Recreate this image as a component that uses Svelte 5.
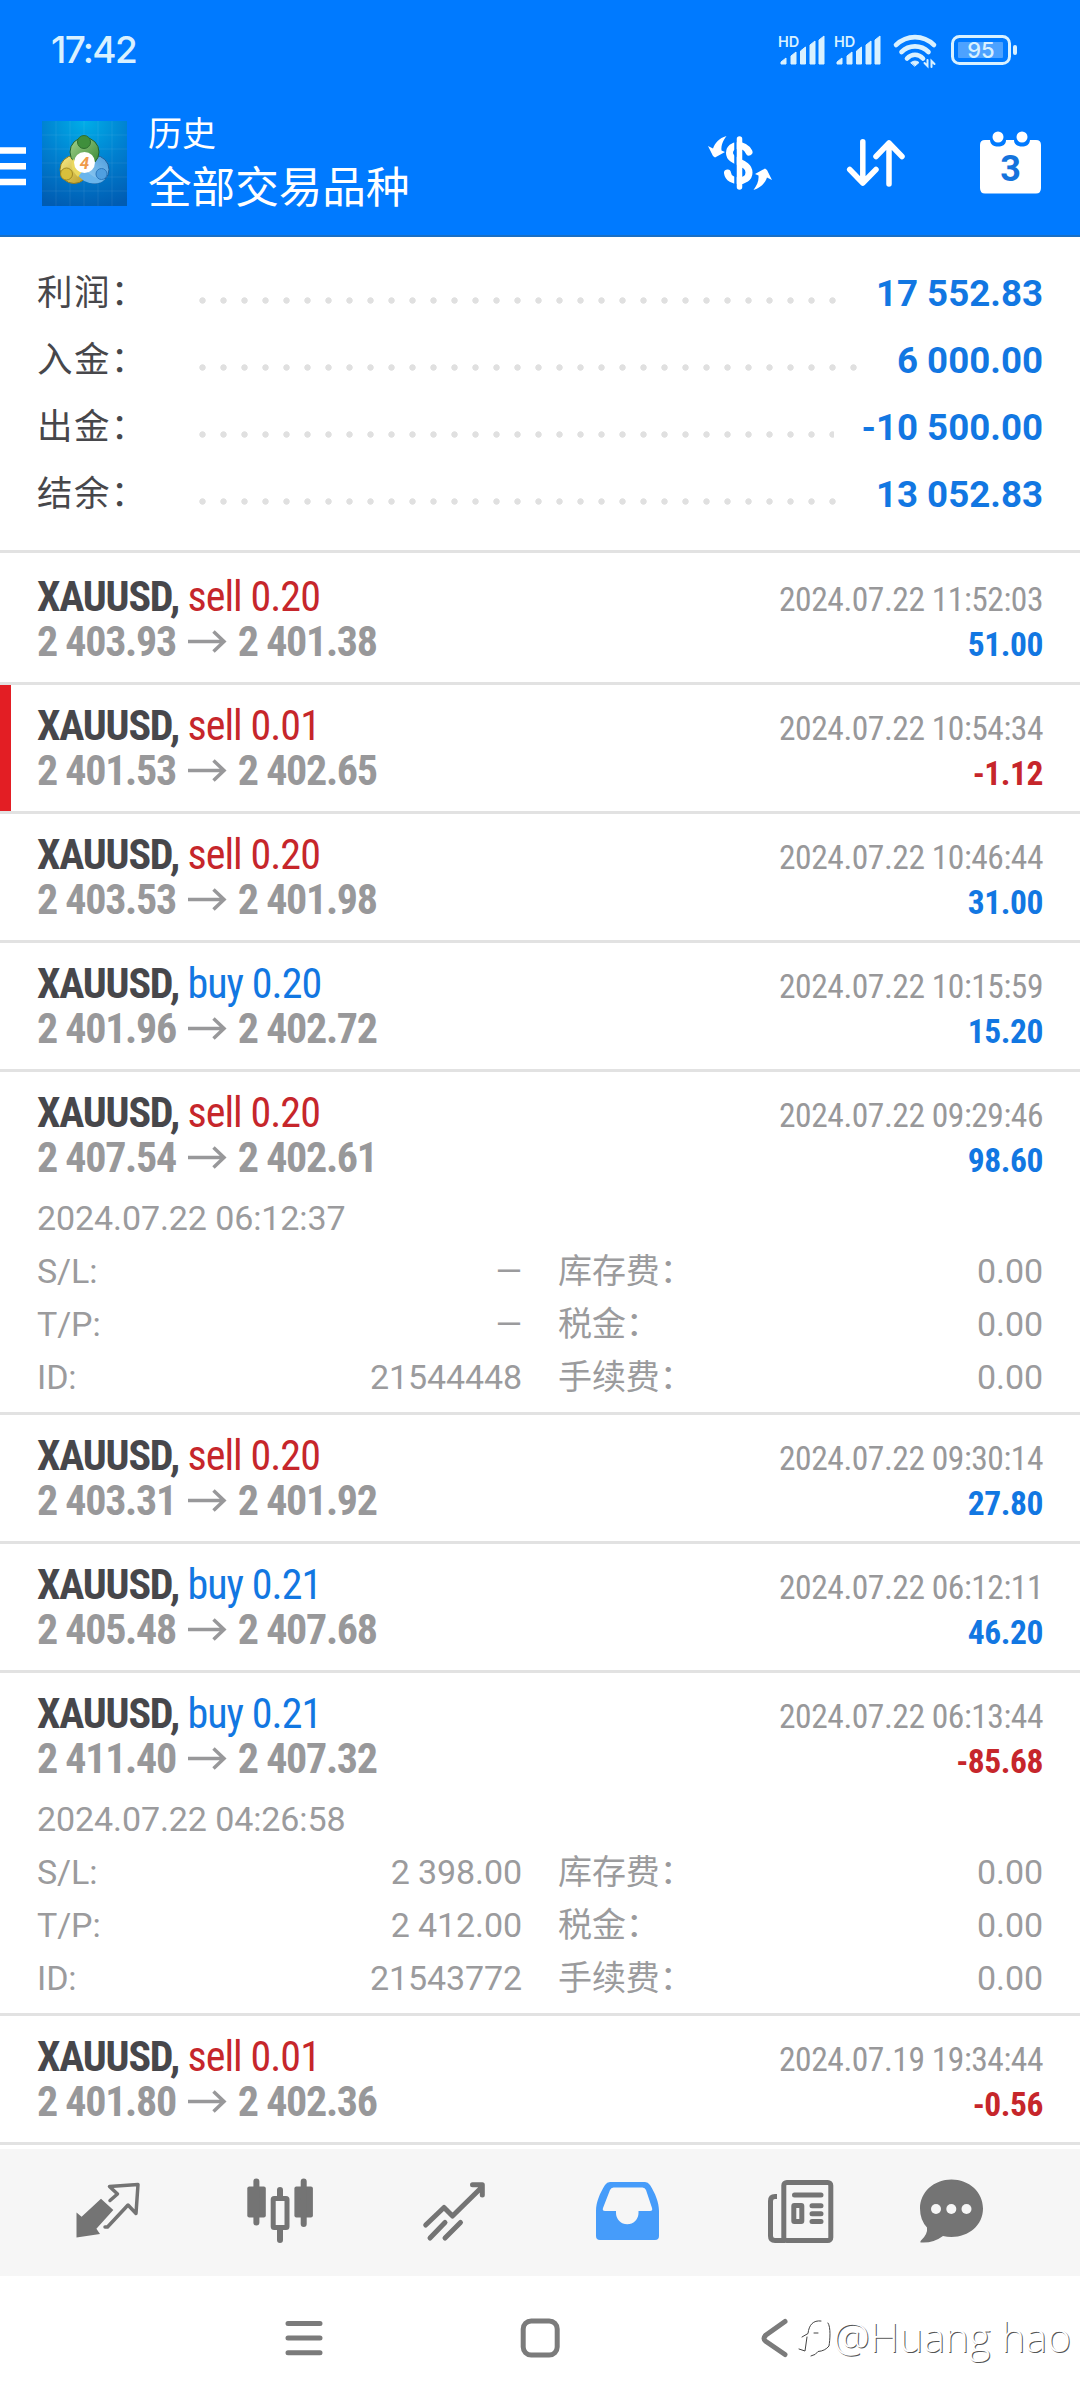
<script lang="ts">
  interface SummaryLine {
    label: string;
    value: string;
  }

  interface Details {
    opened: string;
    rows: [string, string, string, string][];
  }

  interface Deal {
    side: 'buy' | 'sell';
    volume: string;
    open: string;
    close: string;
    time: string;
    profit: string;
    marked?: boolean;
    details?: Details;
  }

  const summary: SummaryLine[] = [
    { label: '利润：', value: '17 552.83' },
    { label: '入金：', value: '6 000.00' },
    { label: '出金：', value: '-10 500.00' },
    { label: '结余：', value: '13 052.83' },
  ];

  function makeDetails(opened: string, sl: string, tp: string, id: string): Details {
    return {
      opened,
      rows: [
        ['S/L:', sl, '库存费：', '0.00'],
        ['T/P:', tp, '税金：', '0.00'],
        ['ID:', id, '手续费：', '0.00'],
      ],
    };
  }

  const deals: Deal[] = [
    { side: 'sell', volume: '0.20', open: '2 403.93', close: '2 401.38', time: '2024.07.22 11:52:03', profit: '51.00' },
    { side: 'sell', volume: '0.01', open: '2 401.53', close: '2 402.65', time: '2024.07.22 10:54:34', profit: '-1.12', marked: true },
    { side: 'sell', volume: '0.20', open: '2 403.53', close: '2 401.98', time: '2024.07.22 10:46:44', profit: '31.00' },
    { side: 'buy', volume: '0.20', open: '2 401.96', close: '2 402.72', time: '2024.07.22 10:15:59', profit: '15.20' },
    {
      side: 'sell', volume: '0.20', open: '2 407.54', close: '2 402.61', time: '2024.07.22 09:29:46', profit: '98.60',
      details: makeDetails('2024.07.22 06:12:37', '—', '—', '21544448'),
    },
    { side: 'sell', volume: '0.20', open: '2 403.31', close: '2 401.92', time: '2024.07.22 09:30:14', profit: '27.80' },
    { side: 'buy', volume: '0.21', open: '2 405.48', close: '2 407.68', time: '2024.07.22 06:12:11', profit: '46.20' },
    {
      side: 'buy', volume: '0.21', open: '2 411.40', close: '2 407.32', time: '2024.07.22 06:13:44', profit: '-85.68',
      details: makeDetails('2024.07.22 04:26:58', '2 398.00', '2 412.00', '21543772'),
    },
    { side: 'sell', volume: '0.01', open: '2 401.80', close: '2 402.36', time: '2024.07.19 19:34:44', profit: '-0.56' },
  ];
</script>

<div class="screen">
  <header>
    <div class="status">
      <span class="clock">17:42</span>
      <div class="indicators">
        {#each [0, 1] as sim (sim)}
          <svg class="signal" width="48" height="32" viewBox="0 0 48 32">
            <text x="0" y="12.5">HD</text>
            <path d="M3 30v-2l5-4v6zM13 30V22l5-4v12zM22.500 30V17l5-4v17zM32 30V11l5-4v23zM41 30V6l5-4v28z" />
          </svg>
        {/each}
        <svg class="wifi" width="44" height="34" viewBox="0 0 44 34">
          <path d="M3 11C14 0.500 30 0.500 41 11M8.500 18C16 10.500 28 10.500 35.500 18M14 24.500C18.500 19.500 25.500 19.500 30 24.500" />
          <path class="solid" d="M18 28.500Q22 25.500 26 28.500L22 32Z" />
          <path class="thin" d="M34.500 26v6l-3-3M38.500 33v-6l3 3" />
        </svg>
        <svg class="battery" width="67" height="30" viewBox="0 0 67 30">
          <rect class="shell" x="1.500" y="1.500" width="57" height="27" rx="7" />
          <rect class="level" x="7" y="7" width="45" height="16" rx="1" />
          <rect class="cap" x="62" y="10" width="4" height="10" rx="2" />
          <text x="30" y="23" text-anchor="middle">95</text>
        </svg>
      </div>
    </div>

    <div class="toolbar">
      <svg class="burger" width="26" height="40" viewBox="0 0 26 40">
        <path d="M0 5.500H26M0 21.300H26M0 37H26" />
      </svg>
      <svg class="logo" width="85" height="85" viewBox="0 0 85 85">
        <defs>
          <radialGradient id="sky" cx="0.500" cy="0" r="1.050">
            <stop offset="0" stop-color="#00aee8" />
            <stop offset="0.500" stop-color="#0080d0" />
            <stop offset="1" stop-color="#005cb2" />
          </radialGradient>
          <linearGradient id="leaf" x1="0" y1="0" x2="1" y2="1">
            <stop offset="0" stop-color="#a6d48f" />
            <stop offset="1" stop-color="#33842f" />
          </linearGradient>
          <linearGradient id="gold" x1="0" y1="0" x2="1" y2="1">
            <stop offset="0" stop-color="#f8ee8a" />
            <stop offset="1" stop-color="#b8961f" />
          </linearGradient>
          <linearGradient id="water" x1="1" y1="0" x2="0" y2="1">
            <stop offset="0" stop-color="#4b9ada" />
            <stop offset="1" stop-color="#9fd6f8" />
          </linearGradient>
        </defs>
        <rect width="85" height="85" fill="url(#sky)" />
        <path class="grid" d="M14 0V85M28 0V85M42 0V85M56 0V85M70 0V85M0 14H85M0 28H85M0 42H85M0 56H85M0 70H85" />
        <circle cx="53" cy="48.500" r="14" fill="url(#water)" stroke="#1d5e9c" />
        <circle cx="32" cy="48.500" r="14" fill="url(#gold)" stroke="#8b7a20" />
        <circle cx="42.500" cy="31" r="14.500" fill="url(#leaf)" stroke="#23622b" />
        <path d="M34 51Q40 62.500 53 62.500Q60 62 63 58Q50 58 43 48Z" fill="#69b5ec" />
        <path d="M42 48L31 38Q26 46 36 56Z" fill="#ead85f" />
        <circle cx="42" cy="21" r="6.500" fill="#3f8f3c" stroke="#2c6e30" />
        <circle cx="24.500" cy="53" r="6" fill="#d8bf3c" stroke="#a08a24" />
        <circle cx="59.500" cy="53" r="5.500" fill="#4f9fe0" stroke="#2c78bd" />
        <circle cx="42.500" cy="41.500" r="10.500" fill="#fff" />
        <text x="42.500" y="47.500" text-anchor="middle">4</text>
      </svg>
      <div class="titles">
        <span class="title">历史</span>
        <span class="subtitle">全部交易品种</span>
      </div>
      <div class="actions">
        <svg width="64" height="54" viewBox="0 0 64 54">
          <path class="money" d="M41 16C37 7 21.500 7.500 21.500 17C21.500 27 41 25 41 36.500C41 47.500 21 47.500 19.500 37" />
          <path class="slit" d="M27.500 6V48" />
          <path class="bar" d="M31.500 3V51" />
          <path class="fill" d="M0 10L5 12.500C7 7 11 2 18.500 0C15 5 13 9 13.500 14.500L17 16L7 21.500L5 20Z" />
          <path class="fill" d="M64 44L59 41.500C57 47 53 52 45.500 54C49 49 51 45 50.500 39.500L47 38L57 32.500L59 34Z" />
        </svg>
        <svg class="sort" width="58" height="48" viewBox="0 0 58 48">
          <path d="M15.800 2.700V44M2.700 30.500L15.800 44L29 30.500M42 45V4M29 17.500L42 4L55 17.500" />
        </svg>
        <svg class="calendar" width="61" height="63" viewBox="0 0 61 63">
          <path d="M5 9H10C10.500 14 14 15.500 18 15.500S26 14 26 9H34C34 14 38 15.500 42 15.500S49.500 14 50 9H56Q61 9 61 14V57Q61 62.500 56 62.500H5Q0 62.500 0 57V14Q0 9 5 9Z" />
          <circle cx="18" cy="6" r="5.500" />
          <circle cx="42" cy="6" r="5.500" />
          <text x="30.500" y="50" text-anchor="middle">3</text>
        </svg>
      </div>
    </div>
  </header>

  <section class="summary">
    {#each summary as line (line.label)}
      <div class="summary-line">
        <span class="label">{line.label}</span>
        <span class="dots"></span>
        <span class="value">{line.value}</span>
      </div>
    {/each}
  </section>

  <main>
    {#each deals as deal (deal.time)}
      <article class="deal" class:marked={deal.marked}>
        <div class="line">
          <span class="symbol">XAUUSD, <span class="side {deal.side}">{deal.side} {deal.volume}</span></span>
          <span class="time">{deal.time}</span>
        </div>
        <div class="line">
          <span class="prices">
            {deal.open}
            <svg class="arrow" width="38" height="22" viewBox="0 0 38 22">
              <path d="M0 10.500H36M25.500 0.500L36 10.500L25.500 20.500" />
            </svg>
            {deal.close}
          </span>
          <span class="profit" class:loss={deal.profit.startsWith('-')}>{deal.profit}</span>
        </div>
        {#if deal.details}
          <div class="details">
            <div class="opened">{deal.details.opened}</div>
            {#each deal.details.rows as [name, value, fee, amount] (name)}
              <div class="details-row">
                <span>{name}</span>
                <span class="num">{value}</span>
                <span class="fee">{fee}</span>
                <span class="num">{amount}</span>
              </div>
            {/each}
          </div>
        {/if}
      </article>
    {/each}
  </main>

  <nav class="tabs">
    <div class="tab">
      <svg width="65" height="58" viewBox="0 0 65 58">
        <path class="solid" d="M1.500 55.500V30.500L6.600 34.700L26 16.700L38.300 28L21.400 46.700L25 52Z" />
        <path class="line-3" d="M35 18.500L42.500 12L34.500 4.500L63 2.500L61 31.500L53 23L32.500 45H30" />
      </svg>
    </div>
    <div class="tab">
      <svg width="67" height="66" viewBox="0 0 67 66">
        <rect class="solid" x="0.300" y="8.500" width="18.500" height="31" rx="2" />
        <rect class="solid" x="47.400" y="8.500" width="18.500" height="31" rx="2" />
        <rect class="line-5" x="26.200" y="20.500" width="13.800" height="29" rx="1" />
        <path class="line-6" d="M9.400 3.500V44.500M56.700 3.500V46M33 12V19M33 51V62" />
      </svg>
    </div>
    <div class="tab">
      <svg width="62" height="58" viewBox="0 0 62 58">
        <path class="line-5" d="M2.700 43L21 25.500L29.500 34L59 5M49.500 2.700H59.300V13M7 56L22 40.500M22 56L37.500 40.500" />
      </svg>
    </div>
    <div class="tab active">
      <svg width="63" height="58" viewBox="0 0 63 58">
        <path
          class="solid"
          fill-rule="evenodd"
          d="M14 0H49Q52 0 54 3C59 11 63 20 63 29V54Q63 58 59 58H4Q0 58 0 54V29C0 20 4 11 9 3Q11 0 14 0ZM17.500 5.500Q15 5.500 14 8L7 26Q6 29 9 29H20V31A11 11 0 0 0 42.500 31V29H54Q57 29 56 26L50 8Q49 5.500 46.500 5.500Z"
        />
      </svg>
    </div>
    <div class="tab">
      <svg width="67" height="65" viewBox="0 0 67 65">
        <rect class="line-5" x="16.800" y="3.500" width="47" height="58" rx="3" />
        <path class="line-5 butt" d="M10 17.500H8Q3.500 17.500 3.500 22V57Q3.500 61.500 8 61.500H18" />
        <rect class="line-5" x="26.800" y="26.500" width="8" height="16" rx="0.500" />
        <path class="line-5" d="M27.500 16H54M45 26.700H54M45 34.700H54M45 42.500H54" />
      </svg>
    </div>
    <div class="tab last">
      <svg width="64" height="64" viewBox="0 0 64 64">
        <path class="solid" d="M32.500 0.500C50 0.500 64 13 64 29.500S50 58 32.500 58Q28 58 24 57Q14 64.500 1.500 63.500Q1 62.500 2 61.500Q9 55 8 48.500Q1 41 1 29.500C1 13 15 0.500 32.500 0.500Z" />
        <g class="holes">
          <circle cx="17" cy="30" r="5" />
          <circle cx="32.300" cy="30" r="5" />
          <circle cx="47.500" cy="30" r="5" />
        </g>
      </svg>
    </div>
  </nav>

  <footer class="system-nav">
    <svg width="40" height="40" viewBox="0 0 40 40">
      <path d="M4 5.500H36M4 20H36M4 34.700H36" />
    </svg>
    <svg width="40" height="40" viewBox="0 0 40 40">
      <rect x="3.200" y="3" width="34" height="34" rx="8" />
    </svg>
    <svg width="40" height="40" viewBox="0 0 40 40">
      <path d="M29 3.500L10 17Q6 20.500 10 23.500L29 36.500" />
    </svg>
    <div class="watermark">
      <svg width="34" height="40" viewBox="0 0 34 40">
        <path d="M3 21L9 17.500C10 9 14 4 22 5M29 7C32 11 31 24 30 30Q26 35 19 35.500Q17 39 12 40M15 17H19M8 21L6 35L0 33" />
      </svg>
      <span>@Huang hao</span>
    </div>
  </footer>
</div>

<style>
  :global(body) {
    background: #fff;
  }

  .screen {
    width: 1080px;
    height: 2400px;
    display: flex;
    flex-direction: column;
    overflow: hidden;
    background: #fff;
    font-family: Roboto, 'Noto Sans CJK SC', sans-serif;
  }

  svg {
    display: block;
    flex: none;
    overflow: visible;
  }

  /* Header */
  header {
    box-sizing: border-box;
    height: 237px;
    background: #007aff;
    border-bottom: 2px solid #1a6fc4;
    color: #fff;
  }

  .status {
    height: 99px;
    padding: 0 62px 0 51px;
    display: flex;
    align-items: center;
    justify-content: space-between;
    color: #d9f1ff;
  }

  .clock {
    font-family: Inter, sans-serif;
    font-size: 37px;
    font-weight: 500;
    letter-spacing: -1.7px;
  }

  .indicators {
    display: flex;
    align-items: center;
    fill: #d9f1ff;
  }

  .signal {
    margin-right: 8px;
  }

  .signal text {
    font: 600 14.5px Inter, sans-serif;
  }

  .signal path {
    stroke: #d9f1ff;
    stroke-width: 1;
    stroke-linejoin: round;
  }

  .wifi {
    margin: 2px 14px 0 3px;
    fill: none;
    stroke: #d9f1ff;
    stroke-width: 4.6;
    stroke-linecap: round;
  }

  .wifi .solid {
    fill: #d9f1ff;
    stroke-width: 1;
  }

  .wifi .thin {
    stroke-width: 2;
  }

  .battery .shell {
    fill: none;
    stroke: #d9f1ff;
    stroke-width: 3;
  }

  .battery .level {
    fill: #4da2ff;
  }

  .battery text {
    font: 500 22px Inter, sans-serif;
  }

  .toolbar {
    height: 136px;
    padding-right: 39px;
    display: flex;
    align-items: center;
  }

  .burger {
    stroke: #fff;
    stroke-width: 6.5;
    margin: -5px 16px 0 0;
  }

  .logo {
    margin-top: -7px;
  }

  .logo .grid {
    stroke: #fff;
    stroke-opacity: 0.07;
  }

  .logo text {
    font: italic 700 17px Roboto, sans-serif;
    fill: #ef9a4a;
  }

  .titles {
    margin: -6px 0 0 21px;
    display: flex;
    flex-direction: column;
    font-weight: 400;
  }

  .title {
    font-size: 34px;
    line-height: 48px;
  }

  .subtitle {
    font-size: 43.6px;
    line-height: 61px;
  }

  .actions {
    margin: -9px 0 0 auto;
    display: flex;
    align-items: center;
    gap: 75px;
    fill: #fff;
  }

  .money,
  .bar,
  .slit,
  .sort path {
    fill: none;
    stroke: #fff;
    stroke-linecap: round;
    stroke-linejoin: round;
  }

  .money {
    stroke-width: 7;
  }

  .bar {
    stroke-width: 5.5;
  }

  .slit {
    stroke: #007aff;
    stroke-width: 2.5;
  }

  .sort path {
    stroke-width: 5.5;
  }

  .calendar text {
    font: 700 36px Roboto, sans-serif;
    fill: #1473dc;
  }

  /* Totals */
  .summary {
    padding: 23px 37px 22px;
    border-bottom: 3px solid #e2e2e2;
  }

  .summary-line {
    height: 67px;
    line-height: 67px;
    display: flex;
  }

  .label {
    width: 155px;
    font-size: 35.5px;
    letter-spacing: 1.4px;
    color: #47474b;
  }

  .dots {
    flex: 1;
    height: 7px;
    margin: 37px 27px 0 0;
    background: radial-gradient(circle at center, #e0e0e0 2.8px, transparent 3.6px) 0 0 / 21px 7px repeat-x;
  }

  .value {
    font-size: 36.7px;
    font-weight: 700;
    color: #1277e2;
  }

  /* Deals */
  .deal {
    box-sizing: border-box;
    padding: 18px 37px;
    border-bottom: 3px solid #e2e2e2;
    font-family: 'Roboto Condensed', Roboto, sans-serif;
    position: relative;
  }

  .deal:first-child {
    margin-top: 3px;
  }

  .deal.marked::before {
    content: '';
    position: absolute;
    inset: 0 auto 0 0;
    width: 11px;
    background: #e31e24;
  }

  .line {
    height: 45px;
    line-height: 45px;
    display: flex;
    align-items: baseline;
    justify-content: space-between;
    white-space: nowrap;
  }

  .symbol {
    font-size: 42px;
    font-weight: 700;
    letter-spacing: -1.2px;
    color: #47474b;
  }

  .side {
    font-weight: 400;
    letter-spacing: -0.95px;
  }

  .sell {
    color: #c6262b;
  }

  .buy {
    color: #1277e2;
  }

  .prices {
    display: flex;
    align-items: center;
    gap: 12px;
    font-size: 42px;
    font-weight: 700;
    letter-spacing: -1.3px;
    color: #98989a;
  }

  .arrow {
    fill: none;
    stroke: #98989a;
    stroke-width: 3.5;
  }

  .time,
  .profit {
    font-size: 33.5px;
    letter-spacing: -0.45px;
  }

  .time {
    color: #98989a;
  }

  .profit {
    font-weight: 700;
    color: #1277e2;
  }

  .profit.loss {
    color: #c6262b;
  }

  .details {
    margin: 12px 0 -10px;
    font: 400 34px/53px Roboto, 'Noto Sans CJK SC', sans-serif;
    letter-spacing: -0.1px;
    color: #9b9b9d;
  }

  .opened {
    height: 53px;
  }

  .details-row {
    height: 53px;
    display: grid;
    grid-template-columns: 200px 285px 36px 1fr auto;
  }

  .details-row .num {
    text-align: right;
  }

  .details-row .fee {
    grid-column: 4;
  }

  /* Bottom tabs */
  .tabs {
    box-sizing: border-box;
    height: 127px;
    margin-top: 4px;
    padding-left: 21px;
    display: flex;
    background: #f6f6f6;
    fill: none;
    stroke-linecap: round;
    stroke-linejoin: round;
    color: #747474;
  }

  .tab {
    width: 173.300px;
    height: 124px;
    display: flex;
    align-items: center;
    justify-content: center;
  }

  .tab.last {
    width: 127px;
  }

  .tab.active {
    color: #469cfa;
  }

  .solid {
    fill: currentColor;
  }

  .line-3,
  .line-5,
  .line-6 {
    stroke: currentColor;
  }

  .line-3 {
    stroke-width: 3.5;
  }

  .line-5 {
    stroke-width: 5;
  }

  .line-6 {
    stroke-width: 6;
  }

  .butt {
    stroke-linecap: butt;
  }

  .holes {
    fill: #f6f6f6;
  }

  /* System navigation */
  .system-nav {
    flex: 1;
    padding: 42px 0 0 284px;
    display: flex;
    align-items: flex-start;
    gap: 196px;
    position: relative;
    fill: none;
    stroke: #7b7b7b;
    stroke-width: 5;
    stroke-linecap: round;
    stroke-linejoin: round;
  }

  .watermark {
    position: absolute;
    top: 30px;
    right: 9px;
    display: flex;
    align-items: center;
    font: 300 41px/60px 'Open Sans', 'Noto Sans', sans-serif;
    color: #fff;
    text-shadow: 1px 1px 0 #555;
  }

  .watermark svg {
    stroke: #444;
    stroke-width: 1;
  }
</style>
